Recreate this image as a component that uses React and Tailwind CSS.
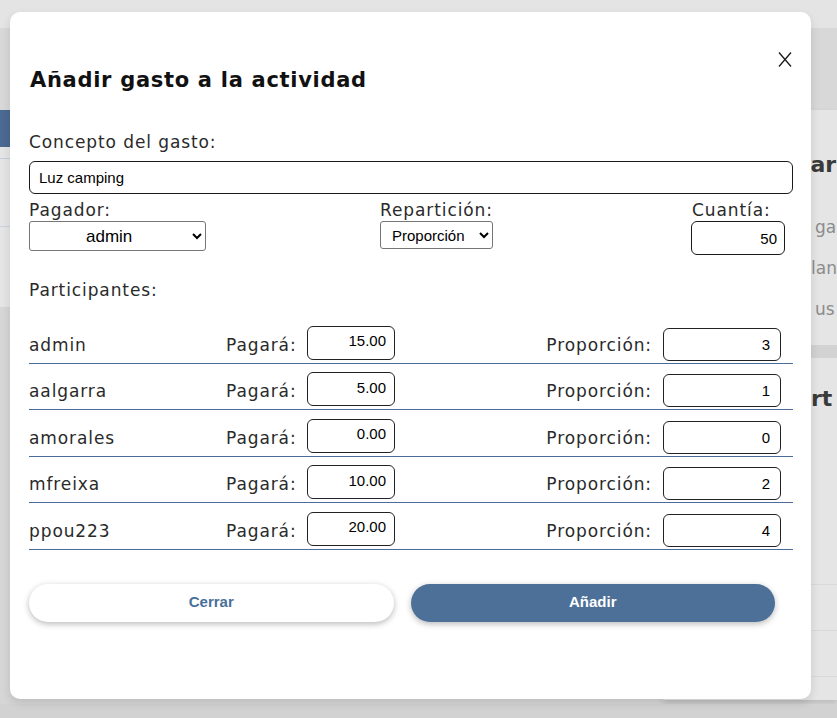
import { useState } from 'react'

const participants = [
  { name: 'admin', pays: '15.00', ratio: '3' },
  { name: 'aalgarra', pays: '5.00', ratio: '1' },
  { name: 'amorales', pays: '0.00', ratio: '0' },
  { name: 'mfreixa', pays: '10.00', ratio: '2' },
  { name: 'ppou223', pays: '20.00', ratio: '4' },
]

function Backdrop() {
  return (
    <div className="flex h-full flex-col">
      <div className="h-[28px] shrink-0 bg-[#e4e4e4]" />
      <div className="h-[82px] shrink-0 bg-[#d8d8d8]" />
      <div className="flex flex-1">
        <div className="flex w-[300px] flex-col">
          <div className="h-[37px] bg-[#4b6a91]" />
          <div className="flex h-[160px] flex-col bg-[#e5e5e5]">
            <div className="h-[12px] border-b border-[#c3cedc]" />
            <div className="h-[68px] border-b border-[#c9d2dd]" />
          </div>
        </div>
        <div className="flex-1" />
        <div className="mb-[18px] flex w-[174px] flex-col bg-[#e5e5e5] font-['DejaVu_Sans',sans-serif] shadow-[0_3px_6px_rgba(0,0,0,0.12)]">
          <p className="mt-[41px] whitespace-nowrap pl-[137px] text-[22px] font-bold leading-[28px] text-[#3a3a3a]">tar</p>
          <p className="mt-[28px] whitespace-nowrap pl-[152px] text-[17px] leading-[41px] text-[#8c8c8c]">ga</p>
          <p className="whitespace-nowrap pl-[148px] text-[17px] leading-[41px] text-[#8c8c8c]">lan</p>
          <p className="whitespace-nowrap pl-[152px] text-[17px] leading-[41px] text-[#8c8c8c]">us</p>
          <div className="mt-[15px] h-[13px] bg-[#d2d2d2]" />
          <p className="mt-[27px] whitespace-nowrap pl-[148px] text-[22px] font-bold leading-[28px] text-[#3a3a3a]">rt</p>
          <div className="mt-[171px] h-[46px] border-t border-[#d9d9d9]" />
          <div className="h-[46px] border-t border-[#d9d9d9]" />
          <div className="border-t border-[#d9d9d9]" />
        </div>
      </div>
    </div>
  )
}

function Row({ name, pays, ratio }) {
  return (
    <div className="flex h-[46.5px] items-center border-b border-[#4a6c96] pt-[6px]">
      <span className="mt-[4px] w-[197px] text-[17px] leading-[24px] tracking-[0.9px] text-[#2a2a2a]">{name}</span>
      <span className="mt-[4px] w-[81px] text-[17px] leading-[24px] tracking-[0.9px] text-[#2a2a2a]">Pagará:</span>
      <input
        type="text"
        defaultValue={pays}
        className="h-[34px] w-[88px] rounded-[6px] border border-[#222] bg-white pb-[4px] pr-[8px] text-right font-['Liberation_Sans',Arial,sans-serif] text-[15px] tracking-normal text-black"
      />
      <span className="mt-[4px] flex-1 pr-[11px] text-right text-[17px] leading-[24px] tracking-[0.9px] text-[#2a2a2a]">Proporción:</span>
      <input
        type="text"
        defaultValue={ratio}
        className="mr-[12px] mt-[3px] h-[33px] w-[118px] rounded-[6px] border border-[#222] bg-white pr-[10px] text-right font-['Liberation_Sans',Arial,sans-serif] text-[15px] tracking-normal text-black"
      />
    </div>
  )
}

export default function App() {
  const [payer, setPayer] = useState('admin')
  const [mode, setMode] = useState('prop')

  return (
    <div className="relative h-[718px] w-full overflow-hidden bg-[#d6d6d6]">
      <Backdrop />
      <div className="absolute inset-x-0 bottom-0 h-[14px] bg-[#d2d2d2]" />

      <div className="absolute left-[10px] top-[12px] flex h-[687px] w-[801px] flex-col rounded-[10px] bg-white pl-[19px] pr-[18px] pt-[54px] font-['DejaVu_Sans',sans-serif] shadow-[0_4px_10px_rgba(0,0,0,0.12)]">
        <button className="absolute right-[19px] top-[40px] h-[15px] w-[14px]" aria-label="Cerrar">
          <svg viewBox="0 0 14 15" className="h-[15px] w-[14px]" fill="none" stroke="#1a1a1a" strokeWidth="1.3">
            <path d="M1 0.5 L13 14.5 M13 0.5 L1 14.5" />
          </svg>
        </button>

        <h2 className="pl-[1px] text-[21px] font-bold leading-[28px] tracking-[0.7px] text-[#111]">
          Añadir gasto a la actividad
        </h2>

        <label className="mt-[38px] text-[17px] leading-[20px] tracking-[0.9px] text-[#2a2a2a]">Concepto del gasto:</label>
        <input
          type="text"
          defaultValue="Luz camping"
          className="mt-[9px] h-[33px] w-full rounded-[6px] border border-[#1a1a1a] bg-white px-[9px] font-['Liberation_Sans',Arial,sans-serif] text-[15px] text-black"
        />

        <div className="mt-[6px] flex">
          <div className="flex w-[351px] flex-col">
            <span className="text-[17px] leading-[20px] tracking-[0.9px] text-[#2a2a2a]">Pagador:</span>
            <select
              value={payer}
              onChange={e => setPayer(e.target.value)}
              className="mt-[1px] h-[30px] w-[177px] rounded-[3px] border border-[#767676] bg-white pl-[52px] font-['Liberation_Sans',Arial,sans-serif] text-[17px] text-black"
            >
              {participants.map(p => (
                <option key={p.name} value={p.name}>{p.name}</option>
              ))}
            </select>
          </div>
          <div className="flex w-[311px] flex-col">
            <span className="text-[17px] leading-[20px] tracking-[0.9px] text-[#2a2a2a]">Repartición:</span>
            <select
              value={mode}
              onChange={e => setMode(e.target.value)}
              className="mt-[1px] h-[28px] w-[113px] rounded-[3px] border border-[#767676] bg-white pl-[7px] font-['Liberation_Sans',Arial,sans-serif] text-[15px] text-black"
            >
              <option value="prop">Proporción</option>
              <option value="equal">Igual</option>
            </select>
          </div>
          <div className="flex w-[94px] flex-col">
            <span className="pl-[1px] text-[17px] leading-[20px] tracking-[0.9px] text-[#2a2a2a]">Cuantía:</span>
            <input
              type="text"
              defaultValue="50"
              className="mt-[1px] h-[34px] w-[94px] rounded-[6px] border border-[#1a1a1a] bg-white pr-[7px] text-right font-['Liberation_Sans',Arial,sans-serif] text-[15px] text-black"
            />
          </div>
        </div>

        <span className="mt-[25px] text-[17px] leading-[20px] tracking-[0.9px] text-[#2a2a2a]">Participantes:</span>

        <div className="mt-[17px] flex flex-col">
          {participants.map(p => (
            <Row key={p.name} {...p} />
          ))}
        </div>

        <div className="mt-[34px] flex gap-[17px] pr-[18px]">
          <button className="h-[38px] flex-1 rounded-full bg-white font-['Liberation_Sans',Arial,sans-serif] text-[15px] font-bold text-[#4a6f9b] shadow-[0_2px_6px_rgba(0,0,0,0.28)]">
            Cerrar
          </button>
          <button className="h-[38px] flex-1 rounded-full bg-[#4d7099] font-['Liberation_Sans',Arial,sans-serif] text-[15px] font-bold text-white shadow-[0_2px_6px_rgba(0,0,0,0.28)]">
            Añadir
          </button>
        </div>
      </div>
    </div>
  )
}
